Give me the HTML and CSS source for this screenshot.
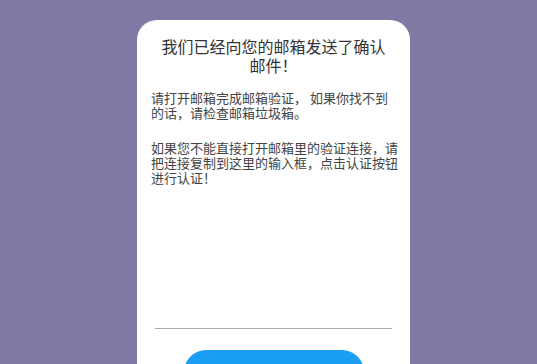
FILE: index.html
```html
<!DOCTYPE html>
<html lang="zh-CN">
<head>
<meta charset="utf-8">
<title>确认邮件</title>
<link rel="stylesheet" href="styles.css">
</head>
<body>
<div class="card">
  <h1 class="title">我们已经向您的邮箱发送了确认邮件！</h1>
  <p class="text">请打开邮箱完成邮箱验证， 如果你找不到的话，请检查邮箱垃圾箱。</p>
  <p class="text">如果您不能直接打开邮箱里的验证连接，请把连接复制到这里的输入框，点击认证按钮进行认证！</p>
  <div class="field"><input class="input" type="text" aria-label="验证连接"></div>
  <button class="btn" type="button" aria-label="认证"></button>
</div>
</body>
</html>
```
FILE: styles.css
```css
html, body {
  margin: 0;
  padding: 0;
}
body {
  background: #7e7aa4;
  height: 364px;
  overflow: hidden;
  font-family: "Noto Sans CJK SC", "Noto Sans", sans-serif;
}
.card {
  margin: 20px 0 0 137px;
  width: 273px;
  height: 344px;
  background: #fff;
  border-radius: 20px 20px 0 0;
  box-sizing: border-box;
  padding: 17px 18px 0 14px;
  display: flex;
  flex-direction: column;
}
.title {
  margin: 0;
  padding-left: 4px;
  font-size: 16px;
  line-height: 19px;
  font-weight: 400;
  color: #333;
  text-align: center;
}
.text {
  margin: 15px 0 0;
  width: 248px;
  font-size: 13px;
  line-height: 15px;
  color: #444;
}
.text + .text {
  margin-top: 20px;
}
.field {
  margin: 134px 0 0 4px;
}
.input {
  display: block;
  width: 100%;
  box-sizing: border-box;
  border: none;
  border-bottom: 1.5px solid #aaa;
  padding: 0;
  height: 10px;
  outline: none;
  background: transparent;
}
.btn {
  align-self: center;
  margin: 21px 0 0 4px;
  width: 180px;
  height: 44px;
  flex-shrink: 0;
  border: none;
  border-radius: 22px;
  background: #1a9ff5;
}
```
